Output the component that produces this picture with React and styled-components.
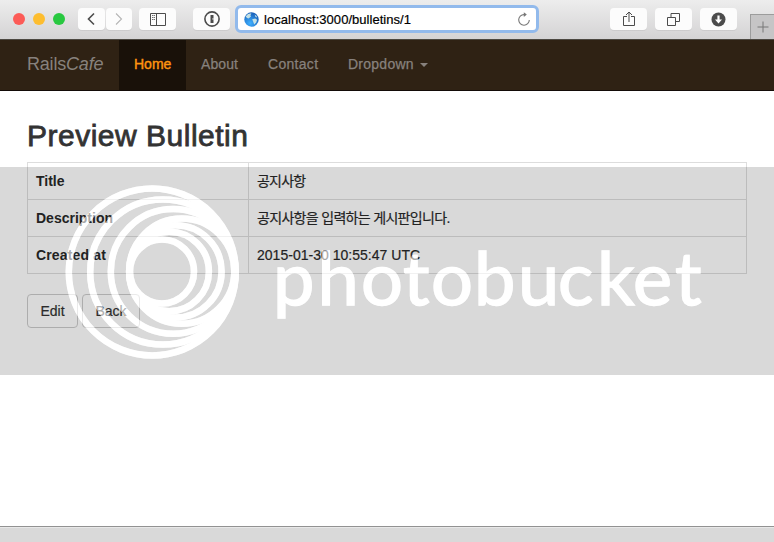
import React from "react";
import styled, { createGlobalStyle } from "styled-components";

const GlobalStyle = createGlobalStyle`
  *, *::before, *::after { box-sizing: border-box; }
  body {
    margin: 0;
    background: #fff;
    overflow: hidden;
    font: 14px/20px "Liberation Sans", "Noto Sans CJK KR", sans-serif;
    color: #333;
  }
`;

const Window = styled.div`
  position: relative;
  display: flex;
  flex-direction: column;
  width: 774px;
  height: 542px;
`;

const Toolbar = styled.header`
  display: flex;
  align-items: flex-start;
  height: 40px;
  flex: none;
  padding: 8px 0 0 13px;
  border-bottom: 1px solid #4c4841;
  background: linear-gradient(#ededed, #d4d3d4);
`;

const Lights = styled.div`
  display: flex;
  gap: 8px;
  padding-top: 5px;
  width: 65px;
`;

const Light = styled.span`
  width: 12px;
  height: 12px;
  border-radius: 50%;
  background: ${(p) => p.$color};
`;

const ToolButton = styled.button`
  display: flex;
  align-items: center;
  justify-content: center;
  width: ${(p) => p.$width || 37}px;
  height: 22px;
  margin: 0 0 0 ${(p) => p.$gap || 0}px;
  padding: 0;
  border: 0;
  border-radius: 4px;
  background: #fcfcfc;
  box-shadow: 0 1px 0 rgba(0, 0, 0, 0.06);
  color: #4c4c4c;
`;

const Address = styled.div`
  display: flex;
  align-items: center;
  width: 304px;
  height: 28px;
  margin: -3px 0 0 5px;
  padding: 0 5px 0 6px;
  border: 3px solid #92baec;
  border-radius: 6px;
  background: #fff;
  color: #000;
  font-size: 13px;
`;

const Url = styled.span`
  flex: 1;
  margin: 2px 0 0 5px;
  letter-spacing: 0.04px;
  -webkit-text-stroke: 0.2px;
`;

const NewTab = styled.button`
  display: flex;
  align-items: center;
  justify-content: center;
  width: 24px;
  height: 25px;
  margin: 6px 0 0 13px;
  padding: 0;
  border: 1px solid #9c9c9c;
  border-width: 1px 0 0 1px;
  background: #c6c5c6;
  color: #777;
`;

const Icon = styled.svg`
  display: block;
  flex: none;
  fill: none;
  stroke: ${(p) => p.$stroke || "currentColor"};
`;

const Navbar = styled.nav`
  display: flex;
  flex: none;
  height: 51px;
  padding-left: 12px;
  border-bottom: 1px solid #130b08;
  background: #2f2214;
  color: #87817d;
`;

const Brand = styled.a`
  width: 107px;
  padding: 14px 15px;
  font-size: 18px;
  letter-spacing: -0.2px;
`;

const NavItem = styled.a`
  display: flex;
  align-items: center;
  width: ${(p) => p.$width}px;
  padding: 0 0 2px 15px;
  background: ${(p) => (p.$active ? "#191109" : "transparent")};
  color: ${(p) => (p.$active ? "#ff9410" : "inherit")};
  -webkit-text-stroke: ${(p) => (p.$active ? "0.4px" : "0.25px")};
  letter-spacing: ${(p) => p.$tracking || 0}px;
`;

const Caret = styled.span`
  margin: 2px 0 0 6px;
  border: 4px solid transparent;
  border-top-color: currentColor;
  border-bottom: 0;
`;

const Page = styled.main`
  flex: 1;
  padding: 28px 27px 0;
`;

const Heading = styled.h1`
  margin: 0 0 10px;
  font-size: 30px;
  font-weight: 400;
  line-height: 33px;
  letter-spacing: 0.5px;
  -webkit-text-stroke: 0.8px;
`;

const Table = styled.table`
  width: 720px;
  border-collapse: collapse;
  table-layout: fixed;
  color: #292929;
`;

const Row = styled.tr`
  height: 37px;
`;

const Label = styled.th`
  width: 221px;
  padding: 8px;
  border: 1px solid #ddd;
  text-align: left;
  letter-spacing: ${(p) => p.$tracking || 0}px;
`;

const Value = styled.td`
  padding: 8px;
  border: 1px solid #ddd;
  letter-spacing: ${(p) => p.$tracking || 0}px;
  -webkit-text-stroke: 0.2px;
`;

const Actions = styled.div`
  display: flex;
  gap: 4px;
  margin-top: 20px;
`;

const Action = styled.button`
  width: ${(p) => p.$width}px;
  height: 34px;
  padding: 0;
  border: 1px solid #ccc;
  border-radius: 4px;
  background: #fff;
  color: #333;
  font: inherit;
  -webkit-text-stroke: 0.2px;
`;

const StatusBar = styled.footer`
  height: 16px;
  flex: none;
  border-top: 1px solid #929292;
  box-shadow: inset 0 1px #e8e8e8;
  background: #d9d9d9;
`;

const Watermark = styled.svg`
  position: absolute;
  left: 0;
  top: 167px;
  pointer-events: none;
`;

const WatermarkText = styled.text`
  font: 400 74px Lato, sans-serif;
  stroke-width: 1.4px;
`;

const rings = [
  [152.3, 272, 83.5],
  [162.8, 272, 72.6],
  [173.1, 271.4, 62.3],
  [181.7, 271.2, 52.6],
  [175.4, 271.4, 46.2],
  [169.1, 271.5, 39.8],
  [162, 271.5, 32],
];

const rows = [
  ["Title", "공지사항", 0, -0.8],
  ["Description", "공지사항을 입력하는 게시판입니다.", 0, -0.68],
  ["Created at", "2015-01-30 10:55:47 UTC", 0.15, 0.02],
];

function PhotoWatermark() {
  return (
    <Watermark width="774" height="208" viewBox="0 167 774 208">
      <defs>
        <g id="brand">
          <g fill="none" strokeWidth="6.5">
            {rings.map(([cx, cy, r]) => (
              <circle key={cx} cx={cx} cy={cy} r={r} />
            ))}
          </g>
          <WatermarkText x="273 317.5 361 403 431 474 518 558 597 633 675" y="305">
            photobucket
          </WatermarkText>
        </g>
        <mask id="cutout" maskUnits="userSpaceOnUse" x="0" y="167" width="774" height="208">
          <rect y="167" width="774" height="208" fill="#fff" />
          <use href="#brand" fill="#000" stroke="#000" />
        </mask>
      </defs>
      <rect y="167" width="774" height="208" fill="#000" fillOpacity="0.15" mask="url(#cutout)" />
      <use href="#brand" fill="#fff" stroke="#fff" opacity="0.6" />
    </Watermark>
  );
}

export default function App() {
  return (
    <>
      <GlobalStyle />
      <Window>
        <Toolbar>
          <Lights>
            <Light $color="#fc5b57" />
            <Light $color="#fdbd2f" />
            <Light $color="#28c840" />
          </Lights>
          <ToolButton $width={27}>
            <Icon width="10" height="14" viewBox="0 0 10 14" strokeWidth="1.6"><path d="M7 1.5 1.5 7 7 12.5" /></Icon>
          </ToolButton>
          <ToolButton $width={26} $gap={1}>
            <Icon width="10" height="14" viewBox="0 0 10 14" strokeWidth="1.1" opacity=".4"><path d="M2 1.5 7.5 7 2 12.5" /></Icon>
          </ToolButton>
          <ToolButton $gap={7}>
            <Icon width="16" height="13" viewBox="0 0 16 13"><path d="M.5.5h15v12H.5zM6.5.5v12" /><path d="M2 2.5h3M2 4.5h3M2 6.5h3" strokeDasharray="1 .5 1.5" strokeWidth=".8" /></Icon>
          </ToolButton>
          <ToolButton $gap={17}>
            <Icon width="16" height="16" viewBox="0 0 16 16"><circle cx="8" cy="8" r="7.1" strokeWidth="1.6" /><path d="M8 4v8" strokeWidth="3" /><path d="M9 7.2v1.5" stroke="#fcfcfc" /></Icon>
          </ToolButton>
          <Address>
            <Icon $stroke="none" width="15" height="15" viewBox="0 0 15 15">
              <defs>
                <radialGradient id="sea" cx=".4" cy=".75" r=".8"><stop stopColor="#3fb0ff" /><stop offset="1" stopColor="#1559b4" /></radialGradient>
              </defs>
              <circle cx="7.5" cy="7.5" r="7.2" fill="url(#sea)" />
              <path d="M1.6 4.6 4 2 7.4 1.3 6.4 3.3 7 4.6 4.6 6.4 3 6zM8.2 7.2l3-.8 1.9 1.4-.9 2.8-2 1.8-.9-2.4zM10.6 2.4l2 1.6.5 1.6-1.6-.6z" fill="#c3e0e4" />
            </Icon>
            <Url>localhost:3000/bulletins/1</Url>
            <Icon $stroke="#777" width="14" height="15" viewBox="0 0 14 15" strokeWidth="1.1"><path d="M8.5 2.6H7A5.3 5.3 0 1 0 12.3 8" /><path d="M6.8.2v4.8l3-2.4z" fill="#777" stroke="none" /></Icon>
          </Address>
          <ToolButton $gap={71}>
            <Icon width="12" height="16" viewBox="0 0 12 16"><path d="M4 5.5H.5v9h11v-9H8M6 11V1M3 4l3-3 3 3" /></Icon>
          </ToolButton>
          <ToolButton $gap={8}>
            <Icon width="13" height="13" viewBox="0 0 13 13"><path d="M.5 4.5h8v8h-8zM4 4.5v-4h8.5v8h-4" /></Icon>
          </ToolButton>
          <ToolButton $gap={8}>
            <Icon width="15" height="15" viewBox="0 0 15 15"><circle cx="7.5" cy="7.5" r="7" fill="currentColor" stroke="none" /><path d="M7.5 3.5v5" stroke="#fff" strokeWidth="2.2" /><path d="M4 7.4h7l-3.5 4z" fill="#fff" stroke="none" /></Icon>
          </ToolButton>
          <NewTab>
            <Icon width="12" height="12" viewBox="0 0 12 12"><path d="M6 .5v11M.5 6h11" /></Icon>
          </NewTab>
        </Toolbar>
        <Navbar>
          <Brand>Rails<em>Cafe</em></Brand>
          <NavItem $active $width={67}>Home</NavItem>
          <NavItem $width={67} $tracking={0.1}>About</NavItem>
          <NavItem $width={80} $tracking={0.3}>Contact</NavItem>
          <NavItem $width={110} $tracking={0.25}>Dropdown<Caret /></NavItem>
        </Navbar>
        <Page>
          <Heading>Preview Bulletin</Heading>
          <Table>
            <tbody>
              {rows.map(([label, value, labelTracking, valueTracking]) => (
                <Row key={label}>
                  <Label $tracking={labelTracking}>{label}</Label>
                  <Value $tracking={valueTracking}>{value}</Value>
                </Row>
              ))}
            </tbody>
          </Table>
          <Actions>
            <Action $width={51}>Edit</Action>
            <Action $width={58}>Back</Action>
          </Actions>
        </Page>
        <StatusBar />
        <PhotoWatermark />
      </Window>
    </>
  );
}
